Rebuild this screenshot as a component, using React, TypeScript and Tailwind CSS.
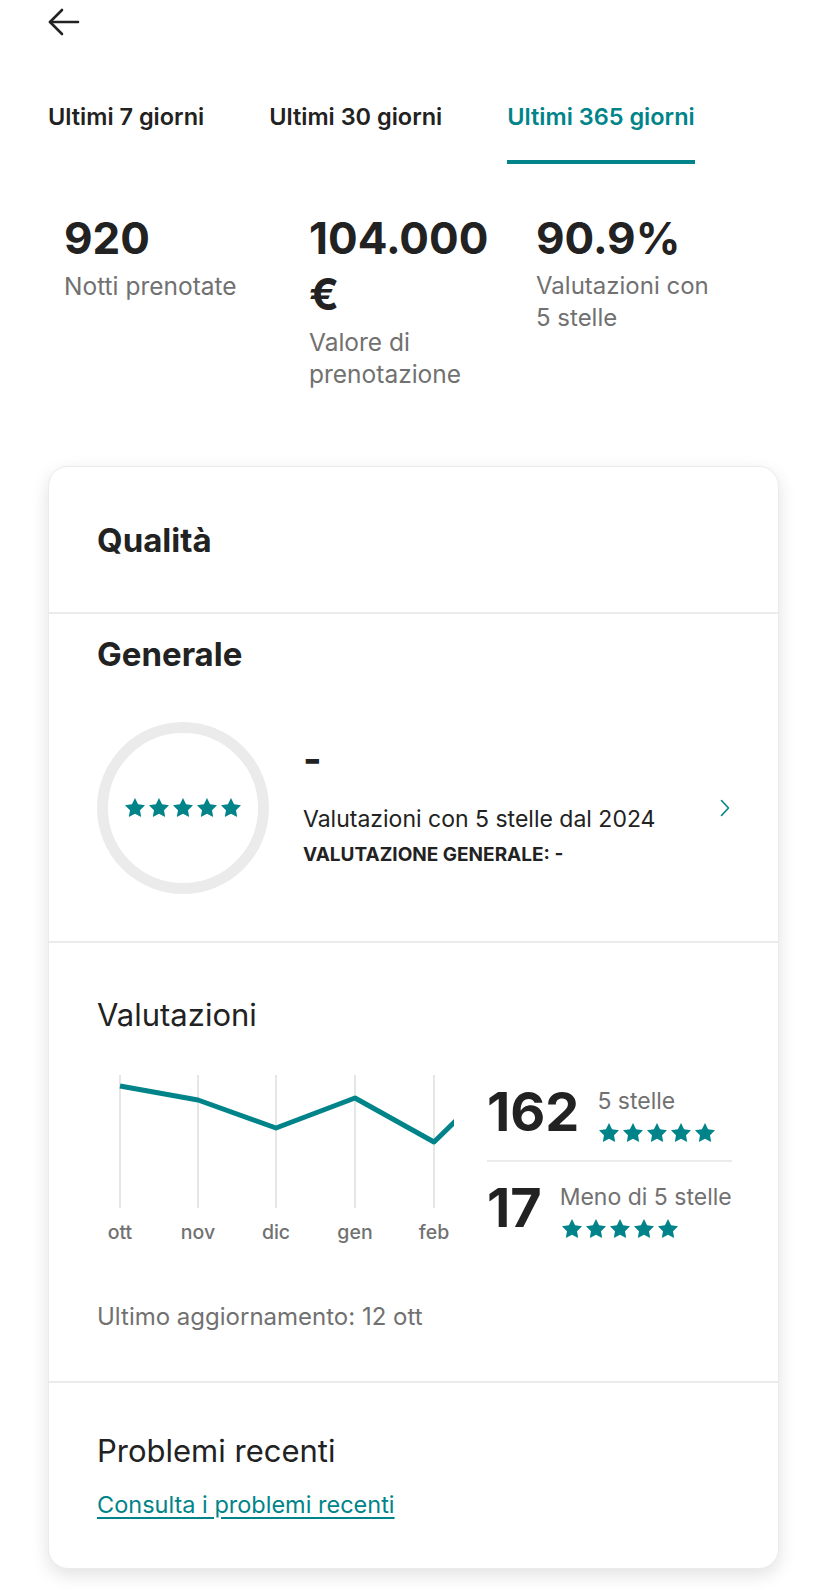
import React from 'react'

const TEAL = '#008489'

function Star({ size = 24 }: { size?: number }) {
  return (
    <svg width={size} height={size} viewBox="0 0 24 24" fill={TEAL}>
      <path d="M12 2l3.09 6.26L22 9.27l-5 4.87 1.18 6.88L12 17.77l-6.18 3.25L7 14.14 2 9.27l6.91-1.01L12 2z" />
    </svg>
  )
}

function Stars() {
  return (
    <div className="flex">
      <Star />
      <Star />
      <Star />
      <Star />
      <Star />
    </div>
  )
}

function BackArrow() {
  return (
    <svg width="32" height="28" viewBox="0 0 32 28" fill="none" stroke="#222222" strokeWidth="2.6" strokeLinecap="round" strokeLinejoin="round">
      <path d="M30 14H2" />
      <path d="M14 2L2 14l12 12" />
    </svg>
  )
}

function Chevron() {
  return (
    <svg width="10" height="18" viewBox="0 0 10 18" fill="none" stroke={TEAL} strokeWidth="1.6" strokeLinecap="round" strokeLinejoin="round">
      <path d="M1.5 1.5L8.5 9l-7 7.5" />
    </svg>
  )
}

const months = [
  { label: 'ott', x: 23 },
  { label: 'nov', x: 101 },
  { label: 'dic', x: 179 },
  { label: 'gen', x: 258 },
  { label: 'feb', x: 337 },
]

function Chart() {
  return (
    <svg width="357" height="192" viewBox="0 0 357 192" className="shrink-0">
      {months.map((m) => (
        <line key={m.label} x1={m.x} y1="13" x2={m.x} y2="146" stroke="#e6e6e6" strokeWidth="2" />
      ))}
      <polyline
        points="23,24 101,38 179,66 258,36 337,80 370,48"
        fill="none"
        stroke={TEAL}
        strokeWidth="5"
        strokeLinejoin="round"
      />
      {months.map((m) => (
        <text
          key={m.label + 't'}
          x={m.x}
          y="177"
          textAnchor="middle"
          fill="#717171"
          fontSize="19.5"
          fontWeight="500"
          fontFamily="Inter, sans-serif"
        >
          {m.label}
        </text>
      ))}
    </svg>
  )
}

export default function App() {
  return (
    <div className="min-h-[1590px] bg-white font-['Inter',sans-serif] text-[#222222]">
      {/* header */}
      <div className="h-[44px] pl-[48px] flex items-center">
        <BackArrow />
      </div>

      {/* tabs */}
      <div className="mt-[58px] pl-[48px] flex gap-[65px] text-[23.5px] font-semibold leading-[30px]">
        <div className="pb-[28px] border-b-4 border-transparent">Ultimi 7 giorni</div>
        <div className="pb-[28px] border-b-4 border-transparent">Ultimi 30 giorni</div>
        <div className="pb-[28px] border-b-4 border-[#008489] text-[#008489]">Ultimi 365 giorni</div>
      </div>

      {/* stats */}
      <div className="mt-[46px] pl-[64px] grid grid-cols-[223px_205px_182px] gap-x-[22px]">
        <div>
          <div className="text-[44px] font-bold leading-[56px]">920</div>
          <div className="mt-[4px] text-[24.5px] leading-[32px] text-[#717171]">Notti prenotate</div>
        </div>
        <div>
          <div className="text-[44px] font-bold leading-[56px]">104.000 €</div>
          <div className="mt-[4px] text-[24.5px] leading-[32px] text-[#717171]">Valore di prenotazione</div>
        </div>
        <div>
          <div className="text-[44px] font-bold leading-[56px]">90.9%</div>
          <div className="mt-[4px] text-[24px] leading-[32px] text-[#717171]">Valutazioni con 5 stelle</div>
        </div>
      </div>

      {/* card */}
      <div className="mt-[76px] mx-[48px] w-[731px] rounded-[20px] border border-[#ebebeb] bg-white shadow-[0_6px_18px_rgba(0,0,0,0.12)]">
        <div className="px-[48px] pt-[53px] pb-[52px] border-b-2 border-[#ebebeb]">
          <h2 className="text-[33px] font-bold leading-[40px]">Qualità</h2>
        </div>

        <div className="px-[48px] pt-[20px] pb-[47px] border-b-2 border-[#ebebeb]">
          <h3 className="text-[33px] font-bold leading-[40px]">Generale</h3>
          <div className="mt-[48px] flex">
            <div className="w-[172px] h-[172px] shrink-0 rounded-full border-[11px] border-[#ebebeb] flex items-center justify-center">
              <Stars />
            </div>
            <div className="flex-1 pl-[34px] pt-[13px]">
              <div className="text-[40px] font-bold leading-[48px]">-</div>
              <div className="mt-[21px] text-[23px] leading-[30px]">Valutazioni con 5 stelle dal 2024</div>
              <div className="mt-[9px] text-[19px] font-bold leading-[24px]">VALUTAZIONE GENERALE: -</div>
            </div>
            <div className="self-center">
              <Chevron />
            </div>
          </div>
        </div>

        <div className="px-[48px] pt-[52px] pb-[48px] border-b-2 border-[#ebebeb]">
          <h3 className="text-[31px] leading-[40px]">Valutazioni</h3>
          <div className="mt-[27px] flex items-start gap-[33px]">
            <Chart />
            <div className="flex-1 mt-[21px]">
              <div className="flex items-center gap-[18px] pb-[13px] border-b-2 border-[#ebebeb]">
                <div className="mb-[6px] text-[54px] font-bold leading-[58px]">162</div>
                <div>
                  <div className="text-[23px] leading-[30px] text-[#717171] whitespace-nowrap">5 stelle</div>
                  <div className="mt-[5px]">
                    <Stars />
                  </div>
                </div>
              </div>
              <div className="flex items-center gap-[18px] pt-[17px]">
                <div className="mb-[6px] text-[54px] font-bold leading-[58px]">17</div>
                <div>
                  <div className="text-[23px] leading-[30px] text-[#717171] whitespace-nowrap">Meno di 5 stelle</div>
                  <div className="mt-[5px]">
                    <Stars />
                  </div>
                </div>
              </div>
            </div>
          </div>
          <div className="mt-[47px] text-[24px] leading-[32px] text-[#717171]">Ultimo aggiornamento: 12 ott</div>
        </div>

        <div className="px-[48px] pt-[48px] pb-[47px]">
          <h3 className="text-[31px] leading-[40px]">Problemi recenti</h3>
          <a href="#" className="mt-[18px] block text-[23.5px] leading-[32px] text-[#008489] underline underline-offset-[4px]">
            Consulta i problemi recenti
          </a>
        </div>
      </div>
    </div>
  )
}
